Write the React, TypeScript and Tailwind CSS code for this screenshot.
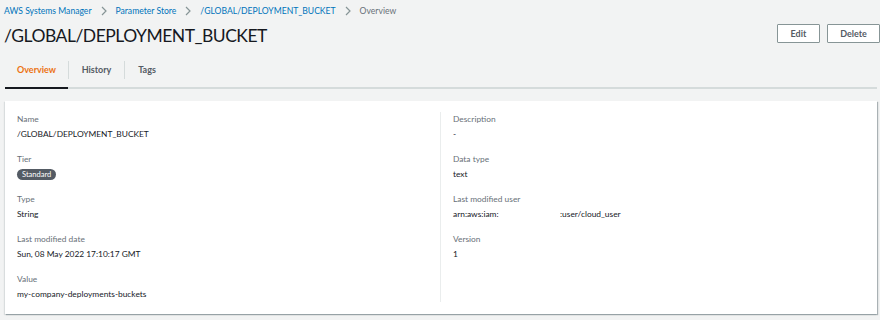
import React from 'react';

const Chevron = () => (
  <svg width="8" height="10" viewBox="0 0 8 10" className="mx-[8px] text-[#879596]">
    <path d="M2 1l4 4-4 4" fill="none" stroke="currentColor" strokeWidth="1.2" />
  </svg>
);

const Field = ({ label, children }: { label: string; children: React.ReactNode }) => (
  <div className="h-[40px]">
    <div className="text-[#687078] text-[8.4px] leading-[14px]">{label}</div>
    <div className="text-[#16191f] text-[8.4px] leading-[14px] mt-[1px]">{children}</div>
  </div>
);

export default function App() {
  return (
    <div className="w-[880px] h-[320px] bg-[#f2f3f3] overflow-hidden" style={{ fontFamily: 'Lato, "Open Sans", sans-serif' }}>
      <div className="flex items-center pl-[4px] h-[22px] text-[8.6px]">
        <span className="text-[#0073bb]">AWS Systems Manager</span>
        <Chevron />
        <span className="text-[#0073bb]">Parameter Store</span>
        <Chevron />
        <span className="text-[#0073bb]">/GLOBAL/DEPLOYMENT_BUCKET</span>
        <Chevron />
        <span className="text-[#687078]">Overview</span>
      </div>

      <div className="flex items-center justify-between pl-[4px] h-[28px]">
        <h1 className="text-[17.5px] leading-[28px] tracking-[-0.5px] text-[#16191f]">/GLOBAL/DEPLOYMENT_BUCKET</h1>
        <div className="flex gap-[7px] -mt-[5px]">
          <button className="h-[19px] w-[43px] border border-[#879596] bg-white text-[9px] font-bold text-[#545b64] rounded-[1px]">Edit</button>
          <button className="h-[19px] w-[53px] border border-[#879596] bg-white text-[9px] font-bold text-[#545b64] rounded-[1px]">Delete</button>
        </div>
      </div>

      <div className="ml-[5px] mr-[3px] mt-[9px] flex border-b-[2px] border-[#d5dbdb] h-[30px]">
        <div className="w-[63px] flex items-start justify-center pt-[4px] border-b-[2px] border-[#16191f] -mb-[2px]">
          <span className="text-[#ec7211] text-[9px] font-bold leading-[14px]">Overview</span>
        </div>
        <div className="w-px h-[18px] bg-[#d5dbdb] mt-[2px]" />
        <div className="w-[55px] flex justify-center pt-[4px]">
          <span className="text-[#545b64] text-[9px] font-bold leading-[14px]">History</span>
        </div>
        <div className="w-px h-[18px] bg-[#d5dbdb] mt-[2px]" />
        <div className="w-[44px] flex justify-center pt-[4px]">
          <span className="text-[#545b64] text-[9px] font-bold leading-[14px]">Tags</span>
        </div>
      </div>

      <div className="ml-[5px] mr-[3px] mt-[12px] bg-white h-[213px] shadow-[1px_1px_1px_0_rgba(0,28,36,0.3),-1px_1px_1px_0_rgba(0,28,36,0.1)] flex pt-[11px]">
        <div className="w-[436px] pl-[12px] border-r border-[#eaeded] h-[190px]">
          <Field label="Name">/GLOBAL/DEPLOYMENT_BUCKET</Field>
          <div className="h-[40px]">
            <div className="text-[#687078] text-[8.4px] leading-[14px]">Tier</div>
            <div className="flex mt-[3px]">
              <span className="bg-[#545b64] text-white text-[7.5px] leading-[11px] h-[11px] px-[5px] rounded-full">Standard</span>
            </div>
          </div>
          <Field label="Type">String</Field>
          <Field label="Last modified date">Sun, 08 May 2022 17:10:17 GMT</Field>
          <Field label="Value">my-company-deployments-buckets</Field>
        </div>
        <div className="pl-[12px]">
          <Field label="Description">-</Field>
          <Field label="Data type">text</Field>
          <Field label="Last modified user">
            <span className="inline-block w-[107px]">arn:aws:iam:</span>:user/cloud_user
          </Field>
          <Field label="Version">1</Field>
        </div>
      </div>
    </div>
  );
}
